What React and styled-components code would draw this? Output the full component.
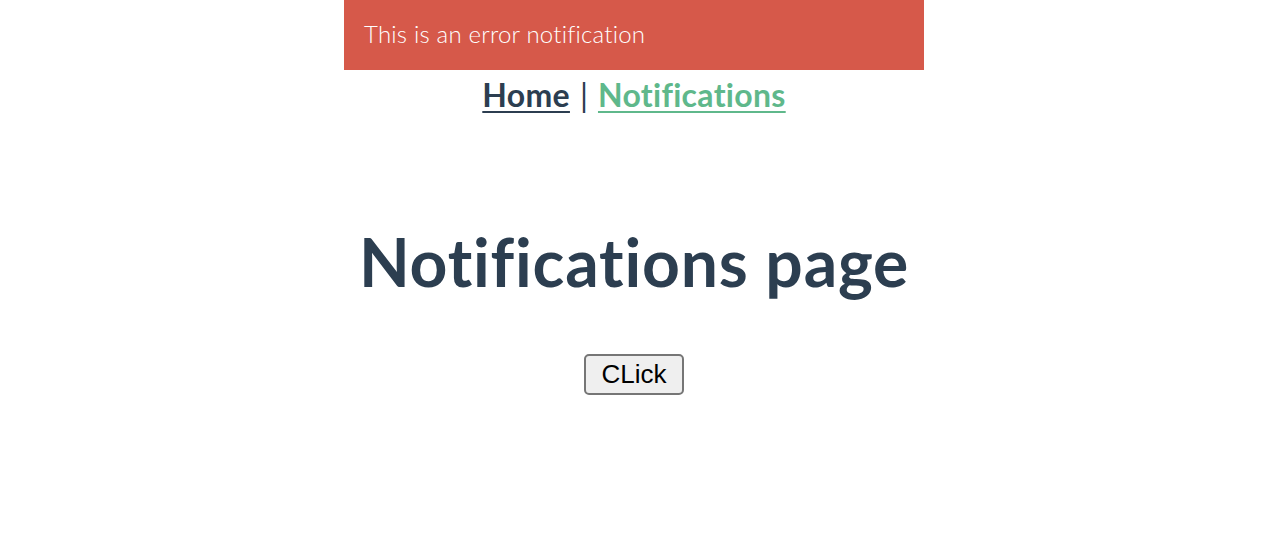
import React from "react";
import styled, { createGlobalStyle } from "styled-components";

const Global = createGlobalStyle`
  html, body { margin: 0; padding: 0; background: #ffffff; }
  body {
    font-family: "Lato", "Noto Sans", sans-serif;
    color: #2c3e50;
    font-variant-ligatures: none;
  }
`;

const Page = styled.div`
  width: 1268px;
  height: 560px;
  position: relative;
  display: flex;
  flex-direction: column;
  align-items: center;
  text-align: center;
`;

const Toast = styled.div`
  position: absolute;
  top: 0;
  left: 344px;
  width: 580px;
  height: 70px;
  box-sizing: border-box;
  padding: 0 20px 3px;
  background: #d6594a;
  color: #ffffff;
  display: flex;
  align-items: center;
  font-family: "Lato", sans-serif;
  font-weight: 300;
  font-size: 24px;
  letter-spacing: 0.2px;
`;

const Nav = styled.nav`
  margin-top: 76px;
  display: flex;
  align-items: baseline;
  gap: 10px;
  font-size: 32px;
  line-height: 38px;
`;

const NavLink = styled.a`
  font-weight: 700;
  color: ${(p) => (p.$active ? "#5fb88b" : "#2c3e50")};
  text-decoration: underline;
  text-decoration-thickness: 2px;
  text-underline-offset: 4px;
  letter-spacing: 0.3px;
`;

const Sep = styled.span`
  color: #2c3e50;
  font-weight: 400;
`;

const Title = styled.h1`
  margin: 109px 0 0;
  font-size: 66px;
  line-height: 78px;
  font-weight: 700;
  color: #2c3e50;
  letter-spacing: 0.8px;
`;

const Button = styled.button`
  margin-top: 53px;
  font-family: "Liberation Sans", Arial, sans-serif;
  font-size: 26px;
  line-height: 31px;
  padding: 3px 15px;
  color: #000;
  background: #efefef;
  border: 2px solid #767676;
  border-radius: 5px;
`;

export default function App() {
  return (
    <>
      <Global />
      <Page>
        <Toast>This is an error notification</Toast>
        <Nav>
          <NavLink href="#">Home</NavLink>
          <Sep>|</Sep>
          <NavLink href="#" $active>Notifications</NavLink>
        </Nav>
        <Title>Notifications page</Title>
        <Button>CLick</Button>
      </Page>
    </>
  );
}
